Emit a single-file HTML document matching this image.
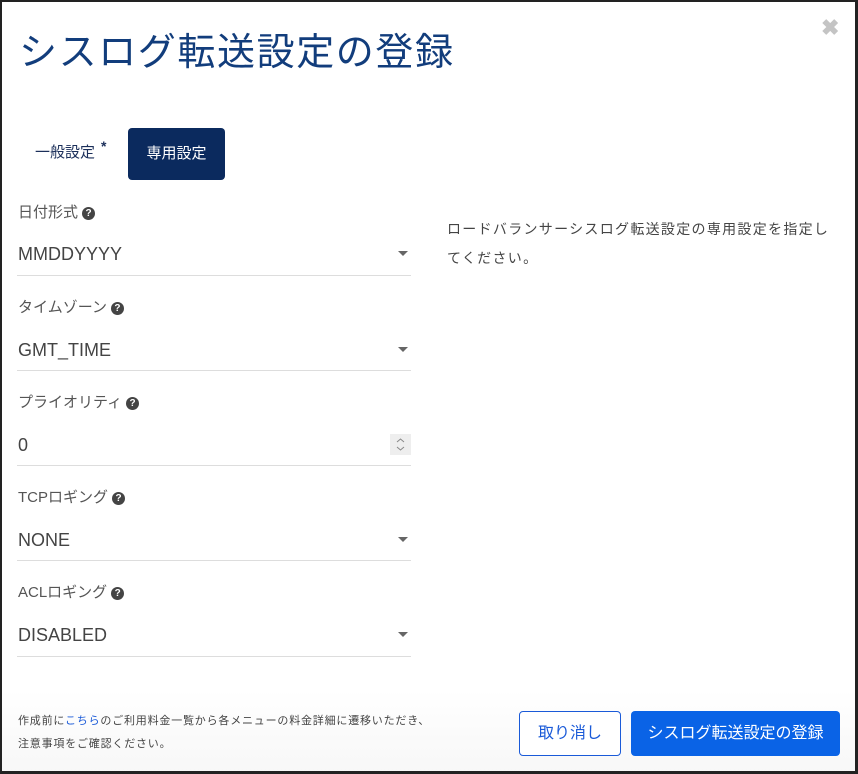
<!DOCTYPE html>
<html><head><meta charset="utf-8"><style>
*{margin:0;padding:0;box-sizing:border-box}
html,body{width:858px;height:774px;overflow:hidden;background:#fff}
body{font-family:"Liberation Sans","Noto Sans CJK JP",sans-serif;position:relative}
.frame{position:absolute;left:0;top:0;width:858px;height:774px;border:2px solid #222;border-right-width:3px;border-bottom-width:3px}
.a{position:absolute;white-space:nowrap}
.title{left:19px;top:27px;font-size:38px;color:#123d7c;line-height:52px;letter-spacing:1.6px}
.close{left:821px;top:17px;font-size:22px;color:#c4c4c4;font-weight:bold;line-height:22px}
.tab{left:35px;top:143px;font-size:15px;color:#1b2f5a;line-height:20px}
.star{left:101px;top:138px;font-size:14px;color:#1b2f5a;font-weight:bold}
.tabact{left:128px;top:128px;width:97px;height:52px;background:#0b2a5e;border-radius:4px;color:#fff;font-size:15px;line-height:52px;text-align:center}
.lbl{left:18px;font-size:15px;color:#555;line-height:20px}
.q{display:inline-block;width:13px;height:13px;border-radius:50%;background:#444;color:#fff;font-size:10px;line-height:13px;text-align:center;font-weight:bold;vertical-align:1px;margin-left:4px}
.val{left:18px;font-size:18px;color:#444;line-height:24px}
.line{left:17px;width:394px;height:1px;background:#ddd}
.caret{left:398px;width:0;height:0;border-left:5px solid transparent;border-right:5px solid transparent;border-top:5px solid #666}
.desc{left:447px;top:215px;font-size:14px;color:#444;line-height:29px;letter-spacing:1.3px}
.foot{left:0;top:690px;width:858px;height:84px;background:linear-gradient(#fff,#f7f7f7)}
.ft{left:18px;font-size:11px;color:#444;line-height:16px;letter-spacing:0.8px}
.btn1{left:519px;top:711px;width:102px;height:45px;border:1px solid #1a5ad8;border-radius:4px;color:#1a5ad8;font-size:16px;line-height:43px;text-align:center;background:#fff}
.btn2{left:631px;top:711px;width:209px;height:45px;background:#0a63e6;border-radius:4px;color:#fff;font-size:16px;line-height:45px;text-align:center}
.spin{left:390px;top:434px;width:21px;height:21px;background:#eee}
</style></head><body>
<div class="a foot"></div>
<div class="a title">シスログ転送設定の登録</div>
<div class="a close">✖</div>
<div class="a tab">一般設定</div>
<div class="a star">*</div>
<div class="a tabact">専用設定</div>

<div class="a lbl" style="top:203px">日付形式<span class="q">?</span></div>
<div class="a val" style="top:242px">MMDDYYYY</div>
<div class="a caret" style="top:251px"></div>
<div class="a line" style="top:275px"></div>

<div class="a lbl" style="top:298px">タイムゾーン<span class="q">?</span></div>
<div class="a val" style="top:338px">GMT_TIME</div>
<div class="a caret" style="top:347px"></div>
<div class="a line" style="top:370px"></div>

<div class="a lbl" style="top:393px">プライオリティ<span class="q">?</span></div>
<div class="a val" style="top:433px">0</div>
<div class="a spin"><svg width="21" height="21" viewBox="0 0 21 21"><path d="M7 8 L10.5 5 L14 8 M7 13 L10.5 16 L14 13" fill="none" stroke="#888" stroke-width="1"/></svg></div>
<div class="a line" style="top:465px"></div>

<div class="a lbl" style="top:488px">TCPロギング<span class="q">?</span></div>
<div class="a val" style="top:528px">NONE</div>
<div class="a caret" style="top:537px"></div>
<div class="a line" style="top:560px"></div>

<div class="a lbl" style="top:583px">ACLロギング<span class="q">?</span></div>
<div class="a val" style="top:623px">DISABLED</div>
<div class="a caret" style="top:632px"></div>
<div class="a line" style="top:656px"></div>

<div class="a desc">ロードバランサーシスログ転送設定の専用設定を指定し<br>てください。</div>

<div class="a ft" style="top:713px">作成前に<span style="color:#1a5ad8">こちら</span>のご利用料金一覧から各メニューの料金詳細に遷移いただき、</div>
<div class="a ft" style="top:736px">注意事項をご確認ください。</div>
<div class="a btn1">取り消し</div>
<div class="a btn2">シスログ転送設定の登録</div>
<div class="frame"></div>
</body></html>
